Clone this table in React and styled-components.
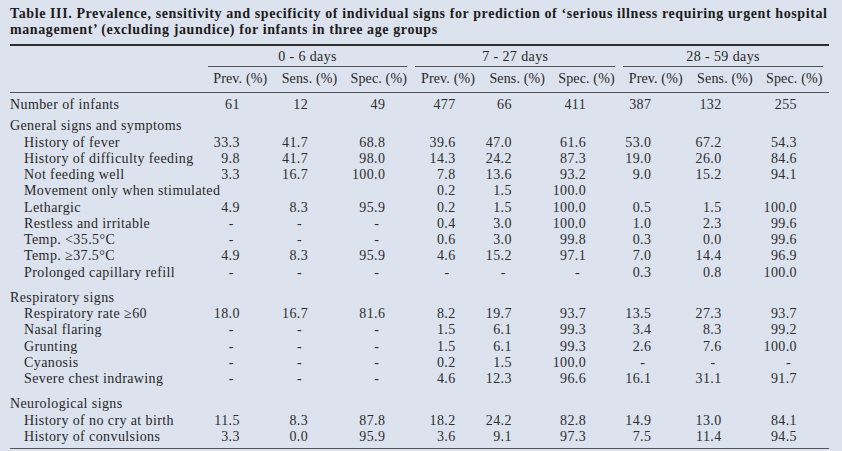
import styled, { createGlobalStyle } from "styled-components";

const GlobalStyle = createGlobalStyle`
  html, body {
    margin: 0;
    padding: 0;
    background: #dce2ee;
  }
`;

const Page = styled.main`
  width: 842px;
  height: 451px;
  box-sizing: border-box;
  padding: 6px 0 0 10px;
  background: #dce2ee;
  color: #282828;
  font-family: "Liberation Serif", "Times New Roman", serif;
  overflow: hidden;
`;

const Title = styled.h4`
  margin: 0 0 6px 0;
  font-size: 14px;
  line-height: 16px;
  font-weight: 700;
  color: #1c1c1c;
  letter-spacing: 0.6px;
  white-space: nowrap;
`;

const Table = styled.table`
  width: 819px;
  border-collapse: collapse;
  table-layout: fixed;
  font-size: 14px;
  letter-spacing: 0.4px;
  border-top: 2px solid #2e2e2e;
  border-bottom: 1px solid #555;
`;

const LabelCol = styled.col`
  width: 195px;
`;

const ValueCol = styled.col`
  width: 69px;
`;

const GroupCell = styled.th`
  padding: 3px 0 0 0;
  font-weight: 400;
  text-align: center;
`;

const GroupLabel = styled.div`
  margin: 0 6px 0 2px;
  line-height: 16px;
  padding-bottom: 1px;
  border-bottom: 1px solid #555;
`;

const HeadRow = styled.tr`
  border-bottom: 1px solid #555;
`;

const HeadCell = styled.th`
  padding: 4px 0 5px 0;
  font-weight: 400;
  font-size: 14px;
  letter-spacing: 0.15px;
  line-height: 16px;
  text-align: center;
  white-space: nowrap;
`;

const Row = styled.tr``;

const Label = styled.td`
  padding: ${({ $top }) => $top || 0}px 0 ${({ $bottom }) => $bottom || 0}px
    ${({ $indent }) => ($indent ? 14 : 0)}px;
  line-height: 16.25px;
  white-space: nowrap;
`;

const Value = styled.td`
  padding: ${({ $top }) => $top || 0}px ${({ $pad, $dash }) => $pad + ($dash ? 6 : 0)}px
    ${({ $bottom }) => $bottom || 0}px 0;
  line-height: 16.25px;
  text-align: right;
  white-space: nowrap;
  color: #2e2e2e;
`;

const pads = [35, 36, 28, 27, 40, 35, 39, 38, 32];

const groups = ["0 - 6 days", "7 - 27 days", "28 - 59 days"];
const heads = ["Prev. (%)", "Sens. (%)", "Spec. (%)"];

const sections = [
  {
    title: "General signs and symptoms",
    top: 5,
    rows: [
      ["History of fever", "33.3", "41.7", "68.8", "39.6", "47.0", "61.6", "53.0", "67.2", "54.3"],
      ["History of difficulty feeding", "9.8", "41.7", "98.0", "14.3", "24.2", "87.3", "19.0", "26.0", "84.6"],
      ["Not feeding well", "3.3", "16.7", "100.0", "7.8", "13.6", "93.2", "9.0", "15.2", "94.1"],
      ["Movement only when stimulated", "", "", "", "0.2", "1.5", "100.0", "", "", ""],
      ["Lethargic", "4.9", "8.3", "95.9", "0.2", "1.5", "100.0", "0.5", "1.5", "100.0"],
      ["Restless and irritable", "-", "-", "-", "0.4", "3.0", "100.0", "1.0", "2.3", "99.6"],
      ["Temp. <35.5°C", "-", "-", "-", "0.6", "3.0", "99.8", "0.3", "0.0", "99.6"],
      ["Temp. ≥37.5°C", "4.9", "8.3", "95.9", "4.6", "15.2", "97.1", "7.0", "14.4", "96.9"],
      ["Prolonged capillary refill", "-", "-", "-", "-", "-", "-", "0.3", "0.8", "100.0"],
    ],
  },
  {
    title: "Respiratory signs",
    top: 9,
    rows: [
      ["Respiratory rate ≥60", "18.0", "16.7", "81.6", "8.2", "19.7", "93.7", "13.5", "27.3", "93.7"],
      ["Nasal flaring", "-", "-", "-", "1.5", "6.1", "99.3", "3.4", "8.3", "99.2"],
      ["Grunting", "-", "-", "-", "1.5", "6.1", "99.3", "2.6", "7.6", "100.0"],
      ["Cyanosis", "-", "-", "-", "0.2", "1.5", "100.0", "-", "-", "-"],
      ["Severe chest indrawing", "-", "-", "-", "4.6", "12.3", "96.6", "16.1", "31.1", "91.7"],
    ],
  },
  {
    title: "Neurological signs",
    top: 9,
    rows: [
      ["History of no cry at birth", "11.5", "8.3", "87.8", "18.2", "24.2", "82.8", "14.9", "13.0", "84.1"],
      ["History of convulsions", "3.3", "0.0", "95.9", "3.6", "9.1", "97.3", "7.5", "11.4", "94.5"],
    ],
  },
];

const infants = ["61", "12", "49", "477", "66", "411", "387", "132", "255"];

function DataRow({ cells, top, bottom, indent }) {
  const [label, ...values] = cells;
  return (
    <Row>
      <Label $indent={indent} $top={top} $bottom={bottom}>
        {label}
      </Label>
      {values.map((v, i) => (
        <Value key={i} $pad={pads[i]} $dash={v === "-"} $top={top} $bottom={bottom}>
          {v}
        </Value>
      ))}
    </Row>
  );
}

export default function App() {
  return (
    <Page>
      <GlobalStyle />
      <Title>
        Table III. Prevalence, sensitivity and specificity of individual signs for prediction of ‘serious illness requiring urgent hospital
        <br />
        management’ (excluding jaundice) for infants in three age groups
      </Title>
      <Table>
        <colgroup>
          <LabelCol />
          {pads.map((_, i) => (
            <ValueCol key={i} />
          ))}
        </colgroup>
        <thead>
          <tr>
            <GroupCell />
            {groups.map((g) => (
              <GroupCell key={g} colSpan={3}>
                <GroupLabel>{g}</GroupLabel>
              </GroupCell>
            ))}
          </tr>
          <HeadRow>
            <HeadCell />
            {groups.map((g) =>
              heads.map((h) => <HeadCell key={g + h}>{h}</HeadCell>)
            )}
          </HeadRow>
        </thead>
        <tbody>
          <DataRow cells={["Number of infants", ...infants]} top={4} />
          {sections.map((s, si) => (
            <>
              <Row key={s.title}>
                <Label $top={s.top} colSpan={10}>
                  {s.title}
                </Label>
              </Row>
              {s.rows.map((r, ri) => (
                <DataRow
                  key={r[0]}
                  cells={r}
                  indent
                  bottom={si === sections.length - 1 && ri === s.rows.length - 1 ? 3 : 0}
                />
              ))}
            </>
          ))}
        </tbody>
      </Table>
    </Page>
  );
}
